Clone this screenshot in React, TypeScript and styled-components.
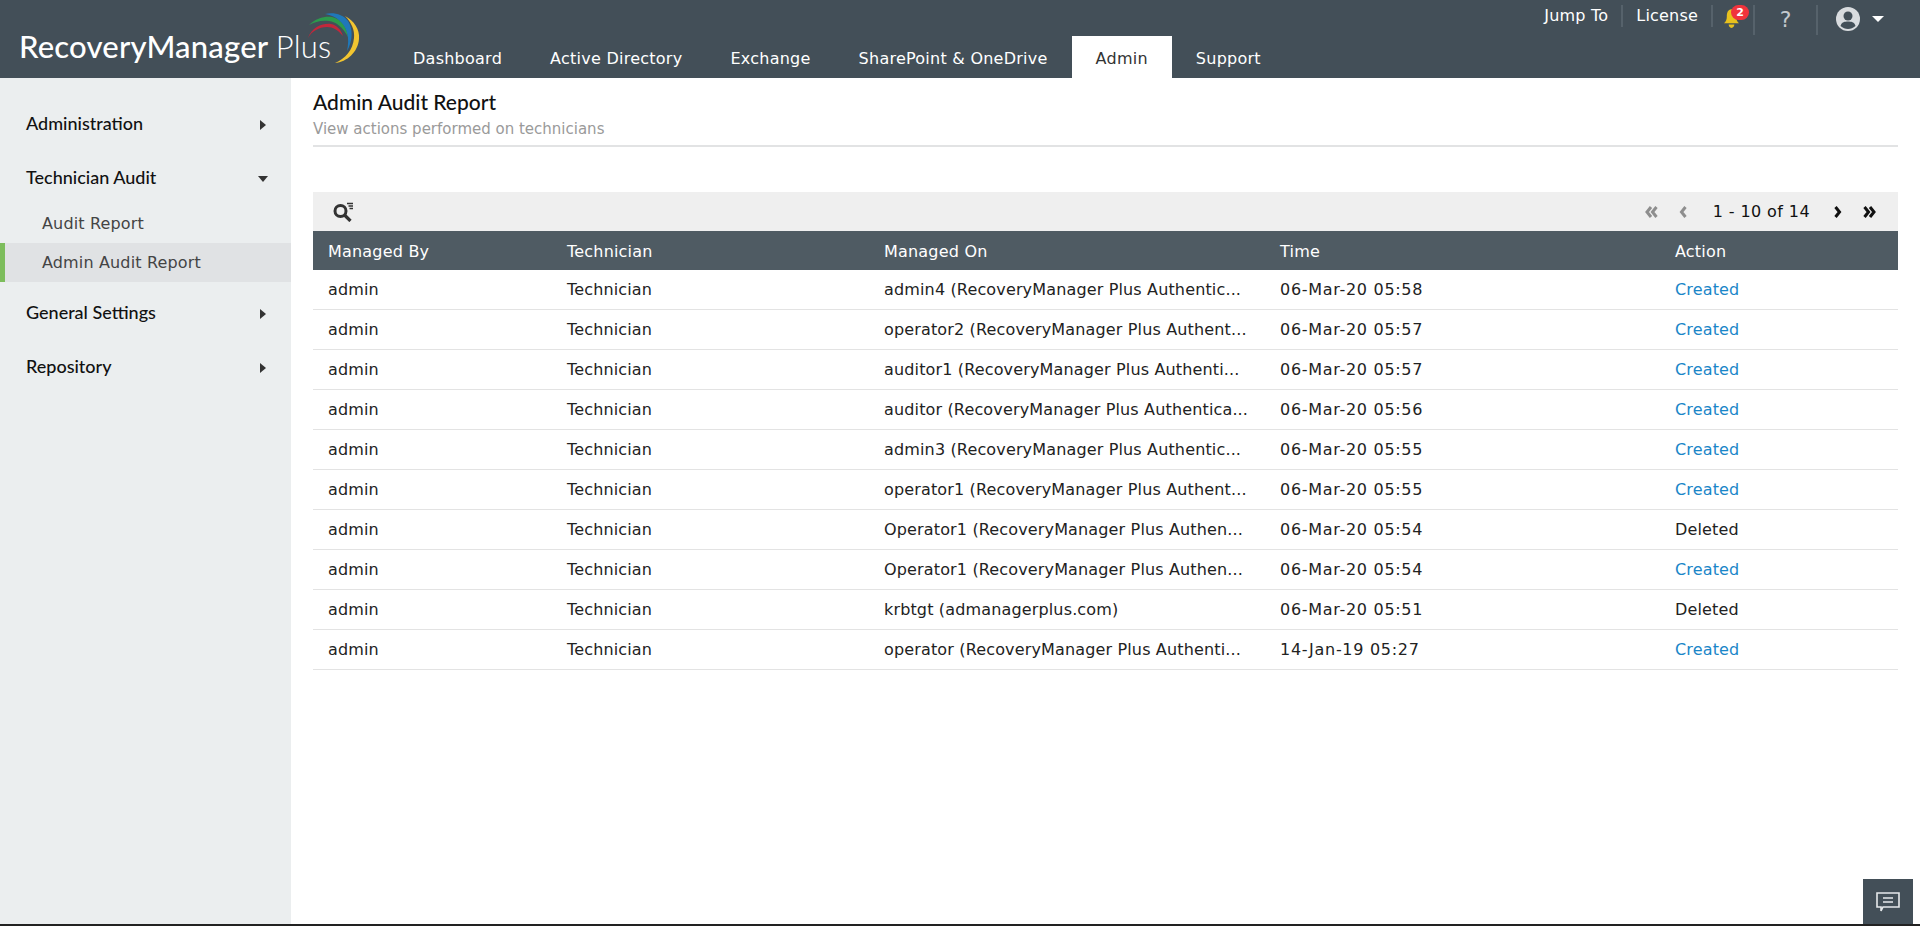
import React from "react";
import styled, { createGlobalStyle } from "styled-components";

const Global = createGlobalStyle`
  html, body { margin: 0; padding: 0; height: 100%; background: #fff; }
  body { font-family: "DejaVu Sans", Tahoma, sans-serif; overflow: hidden; }
  * { box-sizing: border-box; }
`;
const BODY_FONT = `"DejaVu Sans", Verdana, sans-serif`;
const HEAD_FONT = `Lato, "Open Sans", sans-serif`;

const Page = styled.div`height: 926px; display: flex; flex-direction: column; position: relative; border-bottom: 2px solid #222;`;
const Header = styled.header`height: 78px; background: #434f58; display: flex; flex: none; position: relative;`;
const Logo = styled.div`width: 389px; flex: none; padding: 26px 0 0 19px; display: flex; align-items: flex-start; position: relative;`;
const LogoText = styled.span`font-family: ${HEAD_FONT}; font-size: 31px; line-height: 40px; font-weight: 500; color: #fff; white-space: nowrap; letter-spacing: 0.2px;`;
const LogoLight = styled.span`font-weight: 300;`;
const Swoosh = styled.svg`position: absolute; left: 300px; top: 10px;`;
const Tabs = styled.nav`display: flex; align-items: flex-end; height: 78px;`;
const Tab = styled.a<{ $active?: boolean }>`
  height: 42px; padding: 3px 24px 0; display: flex; align-items: center;
  font-family: ${BODY_FONT}; font-size: 16px; letter-spacing: 0.25px; white-space: nowrap;
  color: ${(p) => (p.$active ? "#333" : "#fff")};
  background: ${(p) => (p.$active ? "#fff" : "transparent")};
`;
const TopRight = styled.div`position: absolute; right: 0; top: 0; height: 40px; display: flex; align-items: flex-start;`;
const TopLink = styled.a`
  font-family: ${BODY_FONT}; font-size: 16px; letter-spacing: 0.2px; color: #fff; height: 22px; line-height: 22px; margin-top: 5px; padding: 0 13px; white-space: nowrap;
  border-right: 2px solid #56626b;
`;
const BellCell = styled.div`
  width: 42px; height: 30px; margin-top: 5px; position: relative; padding: 4px 0 0 11px;
  border-right: 2px solid #56626b;
`;
const HelpCell = styled.div`
  width: 63px; height: 30px; margin-top: 5px; text-align: center;
  border-right: 2px solid #56626b;
`;
const UserCell = styled.div`
  width: 102px; margin-top: 7px; padding-left: 18px; display: flex; align-items: center; gap: 12px;
`;
const BellIcon = styled.svg`display: block;`;
const Badge = styled.span`
  position: absolute; left: 18px; top: 0; width: 18px; height: 15px; border-radius: 8px; background: #f0333c; color: #fff;
  font: 700 11px/15px "DejaVu Sans", sans-serif; text-align: center;
`;
const Question = styled.span`font: 400 22px/30px "DejaVu Sans", sans-serif; color: #c4c9cd;`;

const Body = styled.div`flex: 1; display: flex; min-height: 0;`;
const Side = styled.aside`width: 291px; flex: none; background: #ebeeef; padding-top: 18px;`;
const SideHead = styled.div`
  height: 54px; display: flex; align-items: center; justify-content: space-between; padding: 0 23px 0 26px;
  font-family: ${HEAD_FONT}; font-size: 18px; font-weight: 500; color: #111;
`;
const Caret = styled.svg`display: block; margin-top: 3px;`;
const SideItem = styled.div<{ $active?: boolean }>`
  height: 39px; line-height: 39px; font-family: ${BODY_FONT}; font-size: 16px; letter-spacing: 0.15px; color: #444;
  background: ${(p) => (p.$active ? "#e0e2e4" : "transparent")};
  border-left: ${(p) => (p.$active ? "5px solid #7dbd5c" : "none")};
  padding-left: ${(p) => (p.$active ? 37 : 42)}px;
`;
const Sub = styled.div`margin-bottom: 3px;`;

const Main = styled.main`flex: 1; padding: 11px 22px 0; min-width: 0;`;
const Title = styled.h1`margin: 0; font-family: ${HEAD_FONT}; font-size: 21px; line-height: 26px; font-weight: 500; color: #111;`;
const Subtitle = styled.div`font-family: ${BODY_FONT}; font-size: 15px; line-height: 20px; color: #9a9a9a; margin-top: 4px;`;
const Rule = styled.div`height: 2px; background: #e2e3e4; margin-top: 6px; margin-bottom: 45px;`;
const Toolbar = styled.div`height: 39px; background: #efefef; display: flex; align-items: center; justify-content: space-between; padding: 0 22px 0 20px;`;
const Pager = styled.div`display: flex; align-items: center;`;
const PageText = styled.span`font-family: ${BODY_FONT}; font-size: 16px; letter-spacing: 0.4px; color: #111; margin: 0 24px 0 26px;`;
const PagerBtn = styled.svg`display: block;`;
const PagerGap = styled.span`width: 21px;`;
const Table = styled.table`width: 100%; border-collapse: separate; border-spacing: 0; table-layout: fixed;`;
const Th = styled.th<{ $w: number }>`
  width: ${(p) => p.$w}px; height: 39px; background: #4f5b63; color: #fff; text-align: left; padding: 1px 15px 0;
  font-family: ${BODY_FONT}; font-size: 16px; letter-spacing: 0.2px; font-weight: 400;
`;
const Td = styled.td<{ $link?: boolean; $num?: boolean }>`
  height: 40px; padding: 0 15px; border-bottom: 1px solid #e3e3e3; white-space: nowrap; overflow: hidden;
  font-family: ${BODY_FONT}; font-size: 16px; letter-spacing: ${(p) => (p.$num ? "0.7px" : "0.15px")};
  color: ${(p) => (p.$link ? "#1a86c8" : "#222")};
`;
const Chat = styled.button`
  position: absolute; right: 7px; bottom: 0; width: 50px; height: 45px; border: 0; padding: 0; background: #434f58;
  display: flex; align-items: center; justify-content: center;
`;

const Right = () => (
  <Caret width="10" height="10" viewBox="0 0 10 10"><path d="M2 0 L8 5 L2 10Z" fill="#333" /></Caret>
);
const Down = () => (
  <Caret width="10" height="6" viewBox="0 0 10 6"><path d="M0 0 L10 0 L5 6Z" fill="#333" /></Caret>
);
const Chev = ({ dir, dbl, c }: { dir: "l" | "r"; dbl?: boolean; c: string }) => (
  <PagerBtn width={dbl ? 13 : 8} height="12" viewBox={dbl ? "0 0 13 12" : "0 0 8 12"}>
    <g fill="none" stroke={c} strokeWidth="3" transform={dir === "l" ? `translate(${dbl ? 13 : 8},0) scale(-1,1)` : undefined}>
      <path d="M1.5 1 L5.5 6 L1.5 11" />
      {dbl && <path d="M7 1 L11 6 L7 11" />}
    </g>
  </PagerBtn>
);

const rows: [string, string, string, boolean][] = [
  ["admin4 (RecoveryManager Plus Authentic...", "06-Mar-20 05:58", "Created", true],
  ["operator2 (RecoveryManager Plus Authent...", "06-Mar-20 05:57", "Created", true],
  ["auditor1 (RecoveryManager Plus Authenti...", "06-Mar-20 05:57", "Created", true],
  ["auditor (RecoveryManager Plus Authentica...", "06-Mar-20 05:56", "Created", true],
  ["admin3 (RecoveryManager Plus Authentic...", "06-Mar-20 05:55", "Created", true],
  ["operator1 (RecoveryManager Plus Authent...", "06-Mar-20 05:55", "Created", true],
  ["Operator1 (RecoveryManager Plus Authen...", "06-Mar-20 05:54", "Deleted", false],
  ["Operator1 (RecoveryManager Plus Authen...", "06-Mar-20 05:54", "Created", true],
  ["krbtgt (admanagerplus.com)", "06-Mar-20 05:51", "Deleted", false],
  ["operator (RecoveryManager Plus Authenti...", "14-Jan-19 05:27", "Created", true],
];

export default function App() {
  return (
    <Page>
      <Global />
      <Header>
        <Logo>
          <LogoText>RecoveryManager <LogoLight>Plus</LogoLight></LogoText>
          <Swoosh width="62" height="56" viewBox="300 10 62 56">
            <path d="M308 38 C312 27 323 23 331 24 C337 25 341 30 343 36 C338 30 333 27 327 27 C319 27 312 31 308 38Z" fill="#c2273b" />
            <path d="M309 25 C316 18 325 16 332 17 C341 19 347 27 348 37 C343 27 336 22 329 21 C321 20 315 22 309 25Z" fill="#2c9a4c" />
            <path d="M325 14 C333 12 343 14 348 21 C353 28 353 41 347 51 C350 38 347 28 341 22 C336 17 331 15 325 14Z" fill="#1f78b9" />
            <path d="M345 16 C354 21 360 29 359 39 C358 52 347 62 335 63 C345 59 353 50 354 38 C355 30 351 22 345 16Z" fill="#f2c530" />
          </Swoosh>
        </Logo>
        <Tabs>
          <Tab>Dashboard</Tab>
          <Tab>Active Directory</Tab>
          <Tab>Exchange</Tab>
          <Tab>SharePoint &amp; OneDrive</Tab>
          <Tab $active>Admin</Tab>
          <Tab>Support</Tab>
        </Tabs>
        <TopRight>
          <TopLink>Jump To</TopLink>
          <TopLink>License</TopLink>
          <BellCell>
            <BellIcon width="15" height="19" viewBox="0 0 16 20"><path d="M8 0 C12 0 13 4 13 8 C13 11 14 13 16 15 L0 15 C2 13 3 11 3 8 C3 4 4 0 8 0Z M5 16.5 L11 16.5 C11 18.5 10 20 8 20 C6 20 5 18.5 5 16.5Z" fill="#e8c11d" /></BellIcon>
            <Badge>2</Badge>
          </BellCell>
          <HelpCell><Question>?</Question></HelpCell>
          <UserCell>
            <svg width="24" height="24" viewBox="0 0 24 24"><circle cx="12" cy="12" r="12" fill="#d9dcdf" /><circle cx="12" cy="9" r="4.5" fill="#434f58" /><path d="M4.5 19 C5.5 15 9 14.5 12 14.5 C15 14.5 18.5 15 19.5 19 C17 21 15 22 12 22 C9 22 7 21 4.5 19Z" fill="#434f58" /></svg>
            <svg width="12" height="6" viewBox="0 0 12 6"><path d="M0 0 L12 0 L6 6Z" fill="#fff" /></svg>
          </UserCell>
        </TopRight>
      </Header>
      <Body>
        <Side>
          <SideHead>Administration<Right /></SideHead>
          <SideHead>Technician Audit<Down /></SideHead>
          <Sub>
            <SideItem>Audit Report</SideItem>
            <SideItem $active>Admin Audit Report</SideItem>
          </Sub>
          <SideHead>General Settings<Right /></SideHead>
          <SideHead>Repository<Right /></SideHead>
        </Side>
        <Main>
          <Title>Admin Audit Report</Title>
          <Subtitle>View actions performed on technicians</Subtitle>
          <Rule />
          <Toolbar>
            <svg width="20" height="20" viewBox="0 0 20 20">
              <circle cx="7.5" cy="9" r="5.5" fill="none" stroke="#333" strokeWidth="3" />
              <path d="M11.5 13 L17.5 19" stroke="#333" strokeWidth="3.2" />
              <path d="M14 1.5 H20 M15.5 4 H20 M16.5 6.5 H20" stroke="#333" strokeWidth="1.4" />
            </svg>
            <Pager>
              <Chev dir="l" dbl c="#8e8e8e" />
              <PagerGap />
              <Chev dir="l" c="#8e8e8e" />
              <PageText>1 - 10 of 14</PageText>
              <Chev dir="r" c="#111" />
              <PagerGap />
              <Chev dir="r" dbl c="#111" />
            </Pager>
          </Toolbar>
          <Table>
            <thead>
              <tr>
                <Th $w={239}>Managed By</Th>
                <Th $w={317}>Technician</Th>
                <Th $w={396}>Managed On</Th>
                <Th $w={395}>Time</Th>
                <Th $w={238}>Action</Th>
              </tr>
            </thead>
            <tbody>
              {rows.map((r, i) => (
                <tr key={i}>
                  <Td>admin</Td>
                  <Td>Technician</Td>
                  <Td>{r[0]}</Td>
                  <Td $num>{r[1]}</Td>
                  <Td $link={r[3]}>{r[2]}</Td>
                </tr>
              ))}
            </tbody>
          </Table>
        </Main>
      </Body>
      <Chat>
        <svg width="24" height="20" viewBox="0 0 24 20"><path d="M1 1 H23 V15 H7 L5 19 V15 H1Z" fill="none" stroke="#e6e9eb" strokeWidth="1.6" /><path d="M7 6 H17 M7 10 H17" stroke="#e6e9eb" strokeWidth="1.6" /></svg>
      </Chat>
    </Page>
  );
}
